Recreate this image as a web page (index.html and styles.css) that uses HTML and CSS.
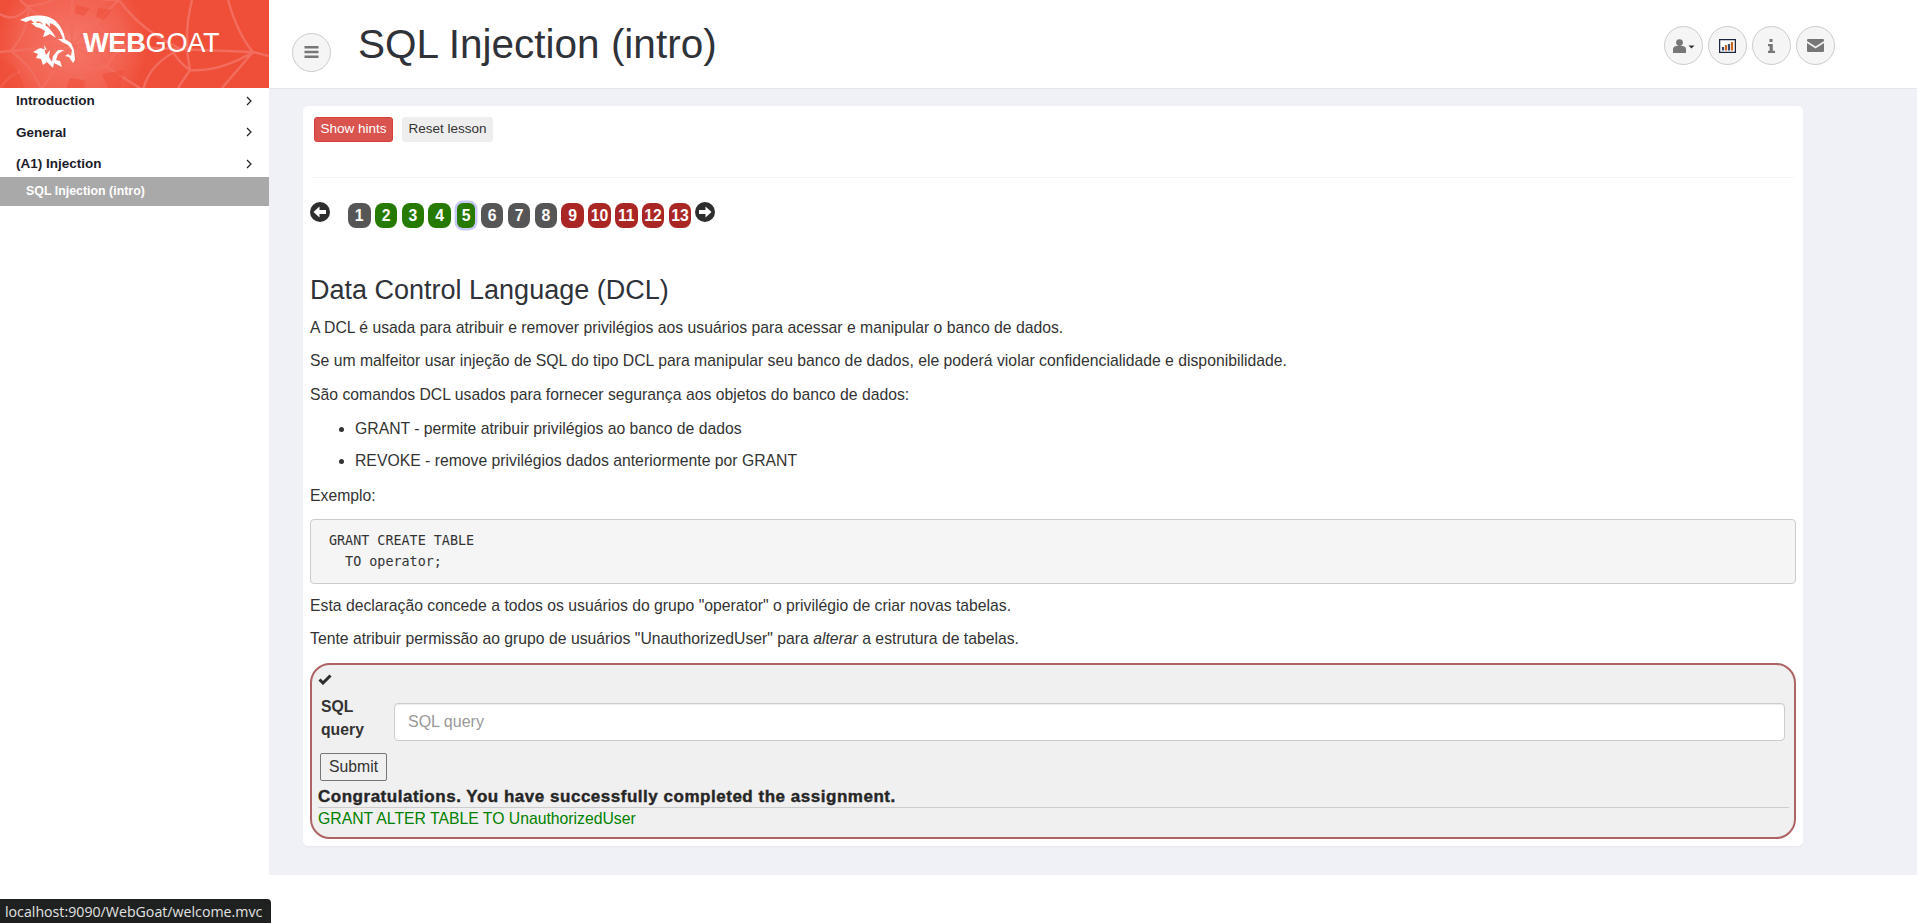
FILE: index.html
```html
<!DOCTYPE html>
<html lang="pt">
<head>
<meta charset="utf-8">
<title>WebGoat</title>
<link rel="stylesheet" href="styles.css">
</head>
<body>
<div class="app">
  <aside class="sidebar">
    <div class="brand">
      <svg class="web" viewBox="0 0 269 88" width="269" height="88" aria-hidden="true">
        <defs>
          <radialGradient id="glow" cx="72" cy="45" r="75" gradientUnits="userSpaceOnUse">
            <stop offset="0" stop-color="#f6796b"/>
            <stop offset=".7" stop-color="#f4695a" stop-opacity=".7"/>
            <stop offset="1" stop-color="#f4695a" stop-opacity="0"/>
          </radialGradient>
        </defs>
        <rect width="160" height="88" fill="url(#glow)"/>
        <g fill="none" stroke="#f36d5e" stroke-width="2.400">
          <path d="M72 45V0M72 45L119 0M72 45L253 52M72 45L190 120M72 45L100 140M72 45L20 120M72 45L0 52M72 45L20 0"/>
          <path d="M72 16.500Q82 24 95 22.500Q105 36 126 47Q110 55 107 67.500Q91 66 80 73.500Q69 66 56 67.500Q53 56 41 48Q51 39 50 25.500Q63 25 72 16.500Z"/>
          <path d="M72 -12Q95 2 119 0Q140 30 181 49Q150 62 143 90Q112 88 89 102Q64 88 41 90Q34 68 11 51Q28 32 29 6Q50 5 72 -12Z"/>
          <path d="M228 0Q238 35 253 52L269 56M253 52L222 88M253 52Q220 72 190 70M192 0Q183 35 190 70L178 88M190 70Q178 62 172 50"/>
          <path d="M0 14Q14 24 30 6M0 88Q10 74 20 72"/>
        </g>
        <g fill="#ef4f39" opacity=".55">
          <path d="M76 5L90 8L84 16L75 13Z"/>
          <path d="M98 8L112 10L104 20L96 17Z"/>
          <path d="M0 60C14 62 20 72 24 88H0Z"/>
          <path d="M102 74L124 70L120 88H108Z"/>
          <path d="M70 78L84 80L86 88H66Z"/>
        </g>
      </svg>
      <svg class="goat" viewBox="0 0 135 88" width="135" height="88" aria-hidden="true">
        <path fill="#fff" d="M20 20C27 16 34 15 41 15.500C51 16 58 21 62 30C64 34 65 37 65 40L63 39C60 30 56 25 50 23L50 27L46 23L45 28L42 23L38 21L35 24L31 20L26 22Z"/>
        <path fill="#fff" d="M31 23L40 23L48 27L53 33L56 38L50 34L46 36L43 37L45 31L40 28L36 27Z"/>
        <path fill="#fff" d="M58 39L65 39L71 43L74 50L75 60L73 63L69 57L65 56L68 54L71 56L72 50L68 45L62 42Z"/>
        <path fill="#fff" d="M44 45L47 50L40 48L33 52L38 54L36 58L41 59L43 65L47 62L53 68L54 63L62 67L60 61L56 60L58 54L64 50L58 50L53 56L52 62L49 57L50 50L46 55L45 52Z"/>
      </svg>
      <div class="brand-row">
        <span class="wordmark"><b>WEB</b>GOAT</span>
      </div>
    </div>
    <nav class="menu">
      <a class="menu-item">Introduction<svg class="chev" viewBox="0 0 6 10" width="6" height="10"><path d="M1 1l4 4-4 4" fill="none" stroke="#222" stroke-width="1.2"/></svg></a>
      <a class="menu-item">General<svg class="chev" viewBox="0 0 6 10" width="6" height="10"><path d="M1 1l4 4-4 4" fill="none" stroke="#222" stroke-width="1.2"/></svg></a>
      <a class="menu-item">(A1) Injection<svg class="chev" viewBox="0 0 6 10" width="6" height="10"><path d="M1 1l4 4-4 4" fill="none" stroke="#222" stroke-width="1.2"/></svg></a>
      <a class="menu-sub">SQL Injection (intro)</a>
    </nav>
  </aside>

  <div class="content">
    <header class="topbar">
      <button class="round menu-toggle" type="button">
        <svg viewBox="0 0 14 12" width="15" height="12"><path d="M0 1.200h14M0 6h14M0 10.800h14" stroke="#777" stroke-width="2.400"/></svg>
      </button>
      <h1 class="title">SQL Injection (intro)</h1>
      <div class="tools">
        <button class="round" type="button">
          <svg viewBox="0 0 22 14" width="22" height="14"><circle cx="6.500" cy="3.600" r="3.400" fill="#777"/><path d="M0 14V10C0 8 2 7 3.500 7H9.500C11 7 13 8 13 10V14Z" fill="#777"/><path d="M15.500 6.500h6l-3 3z" fill="#333"/></svg>
        </button>
        <button class="round" type="button">
          <svg viewBox="0 0 17 14" width="17" height="14"><rect x=".6" y=".6" width="15.800" height="12.800" fill="#fff" stroke="#1c2540" stroke-width="1.300"/><path d="M4 11.500V8M10 11.500V5" stroke="#33466e" stroke-width="2.200"/><path d="M7 11.500V6M13 11.500V3" stroke="#c9681e" stroke-width="2.200"/></svg>
        </button>
        <button class="round" type="button">
          <svg viewBox="0 0 7 14" width="7" height="14"><path fill="#777" d="M1.500 0h3v3h-3zM0 5h4.800v6.700H7V14H0v-2.300h1.600V7.300H0z"/></svg>
        </button>
        <button class="round" type="button">
          <svg viewBox="0 0 17 13" width="17" height="13"><path fill="#777" d="M0 1a1 1 0 0 1 1-1h15a1 1 0 0 1 1 1v1L8.500 7.500 0 2zM0 4l8.500 5.500L17 4v8a1 1 0 0 1-1 1H1a1 1 0 0 1-1-1z"/></svg>
        </button>
      </div>
    </header>

    <main class="main">
      <section class="card">
        <div class="lesson-actions">
          <button class="btn btn-hint" type="button">Show hints</button>
          <button class="btn btn-reset" type="button">Reset lesson</button>
        </div>

        <div class="pager">
          <svg class="arrow" viewBox="0 0 20 20" width="20" height="20"><circle cx="10" cy="10" r="10" fill="#2e2e2e"/><path fill="#fff" d="M3.500 10L9.500 4.500V8H16V12H9.500V15.500Z"/></svg>
          <div class="pages">
            <span class="page p-grey">1</span>
            <span class="page p-green">2</span>
            <span class="page p-green">3</span>
            <span class="page p-green">4</span>
            <span class="page p-green p-current">5</span>
            <span class="page p-grey">6</span>
            <span class="page p-grey">7</span>
            <span class="page p-grey">8</span>
            <span class="page p-red">9</span>
            <span class="page p-red">10</span>
            <span class="page p-red">11</span>
            <span class="page p-red">12</span>
            <span class="page p-red">13</span>
          </div>
          <svg class="arrow" viewBox="0 0 20 20" width="20" height="20"><circle cx="10" cy="10" r="10" fill="#2e2e2e"/><path fill="#fff" d="M16.500 10L10.500 4.500V8H4V12H10.500V15.500Z"/></svg>
        </div>

        <article class="lesson">
          <h2>Data Control Language (DCL)</h2>
          <p>A DCL é usada para atribuir e remover privilégios aos usuários para acessar e manipular o banco de dados.</p>
          <p>Se um malfeitor usar injeção de SQL do tipo DCL para manipular seu banco de dados, ele poderá violar confidencialidade e disponibilidade.</p>
          <p>São comandos DCL usados para fornecer segurança aos objetos do banco de dados:</p>
          <ul>
            <li>GRANT - permite atribuir privilégios ao banco de dados</li>
            <li>REVOKE - remove privilégios dados anteriormente por GRANT</li>
          </ul>
          <p class="lead-in">Exemplo:</p>
          <pre>GRANT CREATE TABLE
  TO operator;</pre>
          <p>Esta declaração concede a todos os usuários do grupo "operator" o privilégio de criar novas tabelas.</p>
          <p>Tente atribuir permissão ao grupo de usuários "UnauthorizedUser" para <em>alterar</em> a estrutura de tabelas.</p>
        </article>

        <form class="attack">
          <svg class="check" viewBox="0 0 14 11" width="14" height="11"><path d="M1.500 5.500L5 9l7.500-7.500" fill="none" stroke="#2e2e2e" stroke-width="3"/></svg>
          <div class="field">
            <label class="field-label">SQL query</label>
            <input class="field-input" type="text" placeholder="SQL query">
          </div>
          <button class="submit" type="button">Submit</button>
          <div class="feedback">Congratulations. You have successfully completed the assignment.</div>
          <div class="output">GRANT ALTER TABLE TO UnauthorizedUser</div>
        </form>
      </section>
    </main>
  </div>
</div>
<div class="status">localhost:9090/WebGoat/welcome.mvc</div>
</body>
</html>
```

FILE: styles.css
```css
* { box-sizing: border-box; }
html, body { margin: 0; height: 100%; background: #fff; }
body { font-family: "Liberation Sans", Arial, sans-serif; font-size: 15.750px; color: #333; overflow: hidden; }

.app { display: flex; align-items: flex-start; }

.sidebar { width: 269px; flex: none; }
.brand { position: relative; height: 88px; background: #ef4f39; overflow: hidden; }
.web, .goat { position: absolute; left: 0; top: 0; }
.brand-row { position: relative; display: flex; align-items: center; padding: 13px 0 0 83px; }
.wordmark { color: #fff; font-size: 27.200px; line-height: 60px; letter-spacing: -.3px; }
.wordmark b { font-weight: 700; }

.menu { display: flex; flex-direction: column; margin-top: -3px; }
.menu-item { position: relative; display: flex; justify-content: space-between; align-items: center; height: 31.500px; padding: 0 17px 0 16px; font-size: 13.500px; font-weight: 700; color: #1c1c2a; }
.menu-sub { position: relative; display: block; height: 29px; margin-top: -2.500px; padding-left: 26px; background: #a9a9a9; color: #fff; font-size: 12.400px; font-weight: 700; line-height: 28px; }

.content { flex: 1; min-width: 0; }
.topbar { display: flex; align-items: center; height: 89px; border-bottom: 1px solid #e4e5ea; background: #fff; padding-left: 23px; }
.round { display: flex; align-items: center; justify-content: center; flex: none; width: 39px; height: 39px; padding: 0; background: #f5f5f5; border: 1px solid #ccc; border-radius: 50%; }
.menu-toggle { margin-top: 16px; }
.title { flex: 1; margin: 0 0 0 27px; font-size: 40.500px; font-weight: 400; line-height: 1.1; color: #2f3238; }
.tools { display: flex; gap: 5px; margin: 3px 82px 0 0; }

.main { height: 786px; padding: 17px 114px 0 34px; background: #f0f1f6; }
.card { height: 740px; padding: 0 7px; background: #fff; border-radius: 5px; box-shadow: 0 1px 2px rgba(0,0,0,.04); }

.lesson-actions { display: flex; gap: 9px; height: 72px; padding: 11px 4px 0; border-bottom: 1px solid #f3f3f5; border-radius: 0 0 5px 5px; }
.btn { height: 25px; padding: 0 5.500px 2px; font: 13.500px "Liberation Sans", Arial, sans-serif; border-radius: 3px; }
.btn-hint { background: #d9534f; border: 1px solid #d43f3a; color: #fff; }
.btn-reset { background: #eee; border: 1px solid #eee; color: #333; }

.pager { display: flex; align-items: flex-start; height: 98px; padding-top: 24px; }
.arrow { flex: none; }
.pages { display: flex; gap: 4.300px; margin: 1px 3.500px 0 18px; }
.page { display: block; min-width: 22.500px; height: 25px; padding: 0 2.500px; border-radius: 8px; color: #fff; font-size: 15.750px; font-weight: 700; line-height: 25px; text-align: center; }
.p-grey { background: #565656; }
.p-green { background: #267a00; }
.p-red { background: #aa2624; }
.p-current { min-width: 18px; padding: 0 2px; margin: 0 1.500px 0 2px; box-shadow: 0 0 0 2.500px #c9c9f8; border-radius: 6px; }

.lesson h2 { margin: 0 0 12px; font-size: 27px; font-weight: 400; line-height: 1.1; color: #2f3238; }
.lesson p { margin: 0 0 13.500px; line-height: 20px; }
.lesson ul { margin: 14.500px 0 15px; padding: 0 0 0 45px; }
.lesson li { margin-bottom: 12px; line-height: 20px; }
.lesson li:last-child { margin-bottom: 0; }
.lesson .lead-in { margin-bottom: 12.500px; }
.lesson pre { margin: 0 0 12px; padding: 10px 18px; height: 65px; background: #f5f5f5; border: 1px solid #ccc; border-radius: 4px; font: 13.400px/21px "DejaVu Sans Mono", monospace; color: #333; }

.attack { display: flex; flex-direction: column; align-items: flex-start; height: 176px; padding: 9px 5px 0 6px; background: #f0f0f0; border: 2px solid #ae6464; border-radius: 20px; }
.check { flex: none; }
.field { display: flex; align-items: flex-start; align-self: stretch; margin: 10px 4px 0 0; padding-left: 3px; }
.field-label { width: 73px; flex: none; font-size: 15.750px; font-weight: 700; line-height: 23px; padding-right: 25px; }
.field-input { flex: 1; min-width: 0; height: 38px; margin-top: 8px; padding: 0 13px; font: 16px "Liberation Sans", Arial, sans-serif; color: #555; background: #fff; border: 1px solid #ccc; border-radius: 4px; box-shadow: inset 0 1px 1px rgba(0,0,0,.075); }
.field-input::placeholder { color: #999; opacity: 1; }
.submit { height: 28px; margin: 12px 0 0 2px; padding: 0 8px; font: 15.750px "Liberation Sans", Arial, sans-serif; color: #333; background: #f0f0f0; border: 1px solid #767676; border-radius: 2px; }
.feedback { align-self: stretch; margin-top: 6px; height: 21px; border-bottom: 1px solid #ccc; font-size: 17px; font-weight: 700; line-height: 20px; letter-spacing: .52px; color: #262626; -webkit-text-stroke: .4px #262626; }
.output { font-size: 15.750px; line-height: 22px; color: #008000; }

.status { position: fixed; left: 0; bottom: 0; height: 24px; padding: 0 9px 0 5px; background: #1f2120; border-radius: 0 4px 0 0; color: #e2e2e2; font: 14.200px/25px "Open Sans", sans-serif; white-space: nowrap; }
```
